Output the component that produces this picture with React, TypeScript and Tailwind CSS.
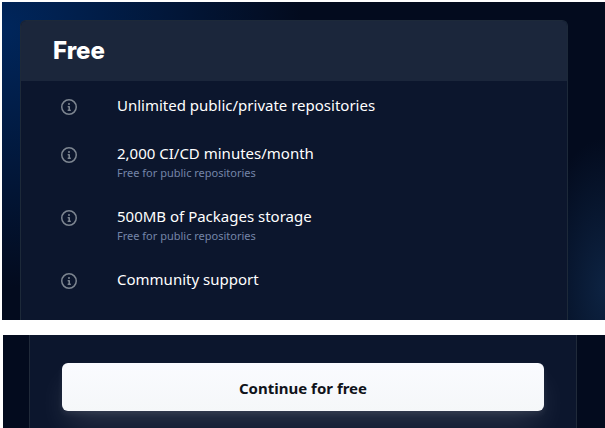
interface Feature {
  title: string;
  note?: string;
}

const features: Feature[] = [
  { title: 'Unlimited public/private repositories' },
  { title: '2,000 CI/CD minutes/month', note: 'Free for public repositories' },
  { title: '500MB of Packages storage', note: 'Free for public repositories' },
  { title: 'Community support' },
];

function InfoIcon() {
  return (
    <svg viewBox="0 0 16 16" className="size-4" fill="currentColor" aria-hidden="true">
      <path d="M0 8a8 8 0 1 1 16 0A8 8 0 0 1 0 8Zm8-6.5a6.5 6.5 0 1 0 0 13 6.5 6.5 0 0 0 0-13ZM6.5 7.75A.75.75 0 0 1 7.25 7h1a.75.75 0 0 1 .75.75v2.75h.25a.75.75 0 0 1 0 1.5h-2a.75.75 0 0 1 0-1.5h.25v-2h-.25a.75.75 0 0 1-.75-.75ZM8 6a1 1 0 1 1 0-2 1 1 0 0 1 0 2Z" />
    </svg>
  );
}

function FeatureRow({ title, note }: Feature) {
  return (
    <li className="flex items-start gap-10">
      <button type="button" aria-label={`About ${title}`} className="mt-1.5 text-[#7d8590]">
        <InfoIcon />
      </button>
      <div>
        <p className="text-[15px] leading-6 text-white">{title}</p>
        {note && <p className="text-[11px] leading-[15px] text-[#7485a8]">{note}</p>}
      </div>
    </li>
  );
}

export default function App() {
  return (
    <main className="bg-white pt-0.5 pl-0.5 font-['Noto_Sans',sans-serif]">
      <section className="bg-[#030b1e] bg-[radial-gradient(ellipse_70px_150px_at_100%_90%,#0d2342,transparent),radial-gradient(ellipse_300px_260px_at_0%_8%,#00265c,transparent)] pt-[18px] pr-[37px] pl-[18px]">
        <div className="h-[300px] overflow-hidden rounded-t-md border border-b-0 border-[#1d2939] bg-[#0c162d]">
          <header className="bg-[#1b263b] px-8 py-3.5">
            <h2 className="font-['Inter',sans-serif] text-[24px] leading-8 font-extrabold text-white">Free</h2>
          </header>
          <ul className="flex flex-col gap-6 px-10 pt-3">
            {features.map((feature) => (
              <FeatureRow key={feature.title} {...feature} />
            ))}
          </ul>
        </div>
      </section>

      <section className="mt-[15px] ml-px overflow-hidden bg-[#030b1e] pr-7 pl-[26px]">
        <div className="border-x border-[#202a3a] bg-[#0c162d] px-8 pt-7 pb-[17px]">
          <button
            type="button"
            className="h-12 w-full rounded-md bg-linear-to-b from-[#fafbff] to-[#f5f7f9] pt-0.5 text-[15px] font-bold text-[#10131a] shadow-[0_16px_32px_-6px_rgba(255,255,255,0.14),0_3px_6px_rgba(255,255,255,0.08)]"
          >
            Continue for free
          </button>
        </div>
      </section>
    </main>
  );
}
